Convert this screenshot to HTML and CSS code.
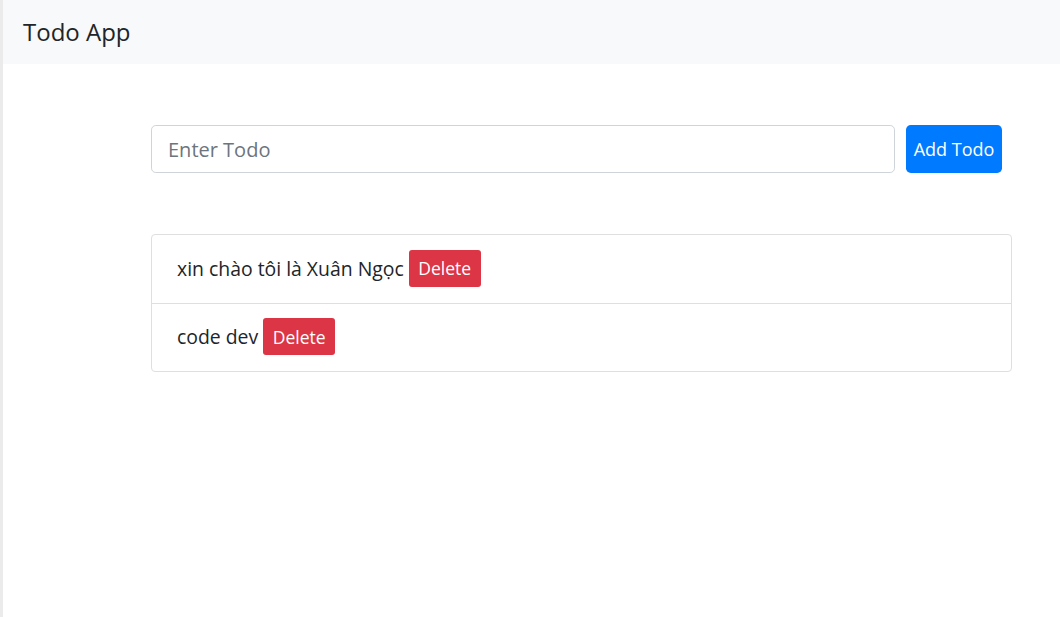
FILE: index.html
```html
<!DOCTYPE html>
<html lang="vi">
<head>
<meta charset="utf-8">
<title>Todo App</title>
<link rel="stylesheet" href="styles.css">
</head>
<body>
<nav class="navbar"><span class="brand">Todo App</span></nav>
<main class="main">
  <form class="todo-form">
    <input class="todo-input" type="text" placeholder="Enter Todo">
    <button class="btn-add" type="button">Add Todo</button>
  </form>
  <ul class="list">
    <li class="item">xin chào tôi là Xuân Ngọc <button class="btn-delete" type="button">Delete</button></li>
    <li class="item">code dev <button class="btn-delete" type="button">Delete</button></li>
  </ul>
</main>
</body>
</html>
```
FILE: styles.css
```css
* { box-sizing: border-box; }
html, body { margin: 0; }
body {
  min-height: 100vh;
  border-left: 3px solid #ebebeb;
  background: #fff;
  font-family: "Open Sans", "Noto Sans", sans-serif;
  color: #212529;
}
.navbar {
  height: 64px;
  background: #f8f9fa;
  display: flex;
  align-items: center;
  padding-left: 20px;
}
.brand {
  font-size: 24px;
  color: #212529;
  line-height: 1;
}
.main {
  margin-left: 148px;
  width: 861px;
  padding-top: 61px;
}
.todo-form {
  display: flex;
  gap: 11px;
  margin: 0;
}
.todo-input {
  width: 744px;
  height: 48px;
  border: 1px solid #ced4da;
  border-radius: 4.8px;
  padding: 0 16px;
  font-family: inherit;
  font-size: 20px;
  color: #495057;
  outline: none;
}
.todo-input::placeholder { color: #6c757d; }
.btn-add {
  width: 96px;
  height: 48px;
  border: none;
  border-radius: 4.8px;
  background: #007bff;
  color: #fff;
  font-family: inherit;
  font-size: 18px;
  padding: 0;
}
.list {
  list-style: none;
  margin: 61px 0 0;
  padding: 0;
  border: 1px solid #dfdfdf;
  border-radius: 4px;
}
.item {
  height: 68px;
  padding: 0 24px 2px 25px;
  display: flex;
  align-items: center;
  font-size: 19.4px;
  white-space: pre;
}
.item + .item {
  border-top: 1px solid #dfdfdf;
}
.btn-delete {
  height: 37px;
  width: 72px;
  border: none;
  border-radius: 3px;
  background: #dc3545;
  color: #fff;
  font-family: inherit;
  font-size: 17.5px;
  padding: 0;
  margin-top: 0;
}
```
